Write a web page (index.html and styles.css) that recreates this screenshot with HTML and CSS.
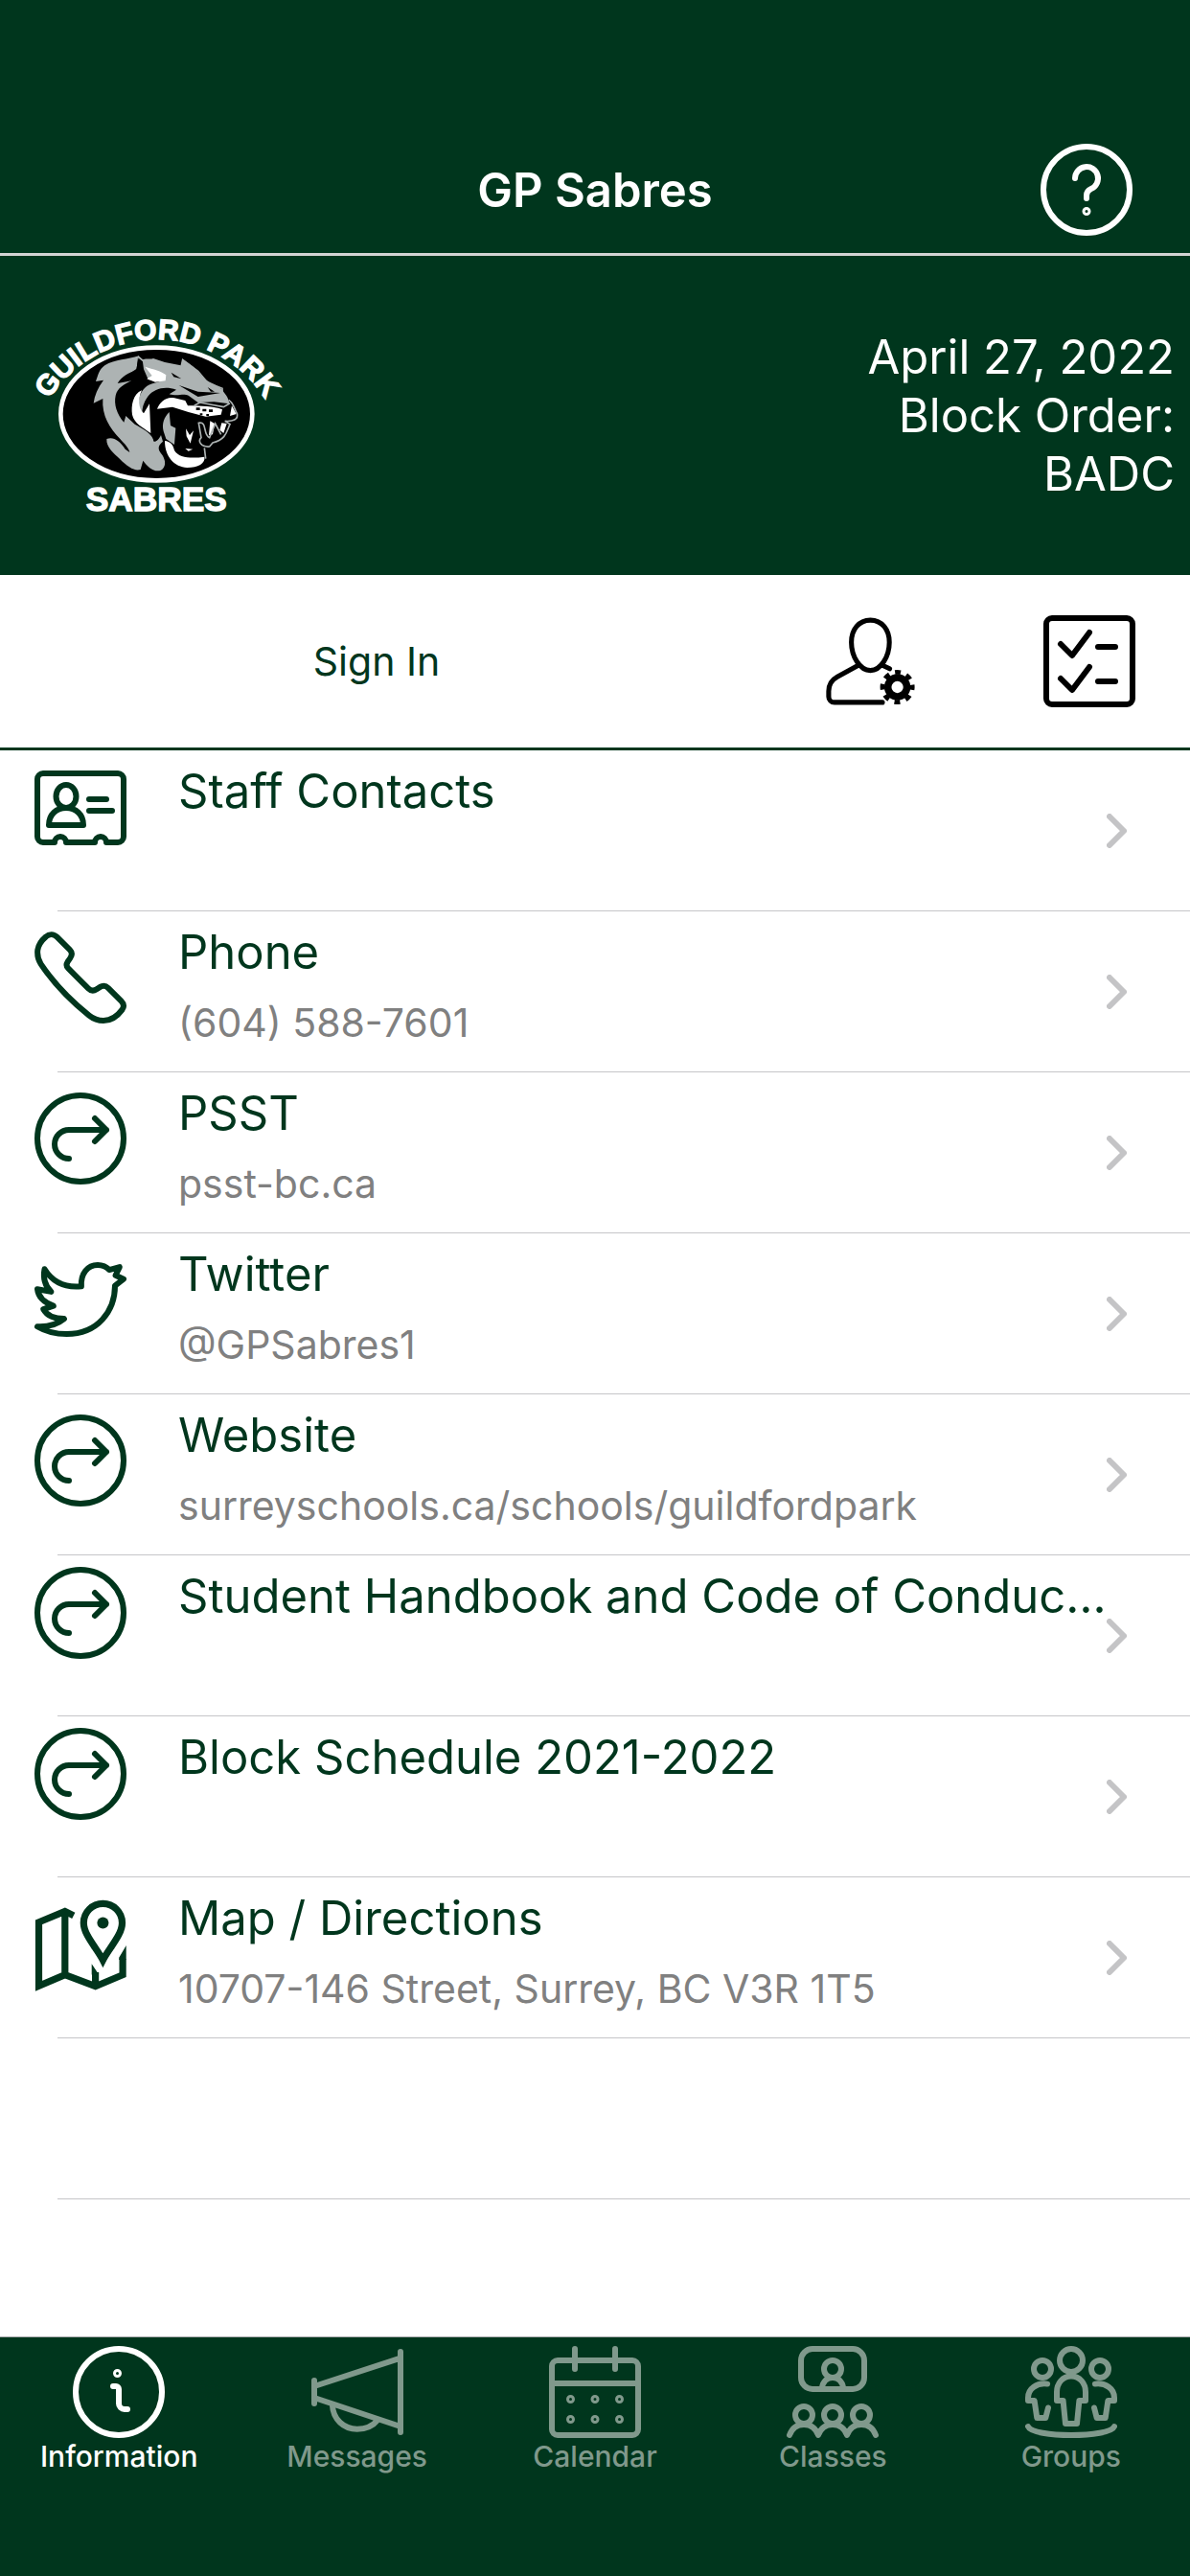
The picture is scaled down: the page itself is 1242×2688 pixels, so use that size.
FILE: index.html
```html
<!DOCTYPE html>
<html lang="en">

<head>
    <meta charset="UTF-8">
    <meta name="viewport" content="width=device-width, initial-scale=1.0">
    <title>GP Sabres</title>
    <link rel="stylesheet" href="styles.css">
</head>
<body>
    <!-- shared icons -->
    <svg class="defs" aria-hidden="true">
        <symbol id="i-forward" viewBox="0 0 32 32">
            <circle cx="16" cy="16" r="15"/>
            <path d="M12 23a5 5 0 0 1 0-10h13M21 9l4 4-4 4"/>
        </symbol>
        <symbol id="i-chevron" viewBox="0 0 21 36">
            <path d="M3 3l15 15L3 33"/>
        </symbol>
    </svg>

    <header class="header">
        <h1>GP Sabres</h1>
        <button class="help" aria-label="Help">
            <svg class="icon" viewBox="0 0 32 32">
                <circle cx="16" cy="16" r="15"/>
                <path d="M12 12a4 4 0 1 1 5.600 3.700C16.500 16.200 16 17 16 18v1"/>
                <circle class="dot" cx="16" cy="23.500" r="1"/>
            </svg>
        </button>
    </header>

    <section class="banner">
        <svg class="logo" viewBox="0 0 870 720" role="img" aria-label="Guildford Park Sabres">
            <path id="arch" d="M90 326A399 399 0 0 1 774 326" fill="none"/>
            <text class="logo-top"><textPath href="#arch" startOffset="50%" text-anchor="middle">GUILDFORD PARK</textPath></text>
            <ellipse cx="430" cy="366" rx="300" ry="208" fill="#000" stroke="#fff" stroke-width="14"/>
            <g fill="#adb3b3">
                <path d="M375 184C340 196 300 194 268 214 250 226 246 248 240 264L264 260C246 284 236 308 233 332L262 318C258 372 284 410 316 444 330 460 342 470 346 486L332 476C314 448 294 436 274 444 272 470 296 488 316 508 340 532 362 546 380 540L388 512C402 532 424 550 444 542 462 530 458 510 448 494 436 480 430 468 450 452L444 432C436 450 420 460 420 446 412 424 384 410 362 398L334 372 328 392C306 366 296 336 302 308 308 284 330 272 352 262L308 270C322 246 344 236 366 230z"/>
                <path d="M386 196C398 190 408 196 420 192L456 204 506 214 514 196C536 210 556 226 570 246 590 268 620 274 636 290 644 304 656 312 658 334L610 328 560 330 530 308C510 300 500 312 470 304L492 290C456 278 424 286 404 310 388 332 384 352 386 366 372 350 370 320 384 296 396 276 416 268 440 266L404 258 390 226z"/>
                <path d="M470 360C454 376 446 396 452 420L460 444 486 462 490 410 474 402z"/>
            </g>
            <path d="M372 188L378 226 396 244 388 274 344 300 356 260 330 250 368 224zM476 236L508 256 484 250zM500 276L560 296 630 300 560 312zM590 282L612 296 600 296z" fill="#000"/>
            <g fill="#fff">
                <path d="M394 218C420 226 446 232 460 244L458 262 426 266 400 256 416 246z"/>
                <path d="M384 292C356 304 350 340 354 368 360 396 388 408 412 426L408 334 390 364C372 348 372 318 384 292z"/>
                <path d="M432 350C440 328 462 310 486 316L520 324 528 340C570 340 610 342 636 352L632 368 584 374 530 360 480 344z"/>
                <path d="M456 450C472 452 482 460 486 480 500 504 540 506 580 500 584 520 560 534 526 534 486 532 456 500 456 450z"/>
                <path d="M522 412L534 432 546 418 536 458 524 436zM520 474L544 476 530 482zM598 388L612 396 606 430 594 432zM634 394L650 396 640 426 628 416zM666 340L680 366 660 372z"/>
            </g>
            <g fill="none" stroke="#adb3b3" stroke-width="5">
                <path d="M372 186L396 206 452 208M508 214L512 196 560 232 590 268 636 286 636 304M656 322C672 332 672 348 682 364 688 384 668 390 644 388M644 388L660 398C650 420 648 446 606 456L596 468C570 470 558 452 570 440L562 394C590 388 574 430 596 440L614 396 632 430M548 340L566 330 640 344 660 332M580 472L584 506"/>
            </g>
            <path d="M554 346h12v8h-12zM574 350h12v8h-12zM594 352h12v8h-12zM566 364h8v6h-8zM586 366h8v6h-8z" fill="#000"/>
            <text class="logo-bottom" x="430" y="669" text-anchor="middle">SABRES</text>
        </svg>
        <p class="notice">April 27, 2022<br>Block Order:<br>BADC</p>
    </section>

    <div class="toolbar">
        <button class="signin">Sign In</button>
        <button class="profile" aria-label="Profile settings">
            <svg class="icon" viewBox="0 0 32 32">
                <path class="thin" d="M15.800 1.700c4 0 6.600 3.300 6.600 7.700 0 5-3 9.800-6.600 9.800s-6.600-4.800-6.600-9.800c0-4.400 2.600-7.700 6.600-7.700zM11.300 17.600l-7 3.800c-2 1.100-3 2.800-3 5v1.900a2 2 0 0 0 2 2H20M20 17.400l2.500 1.200"/>
                <circle class="gear" cx="25.200" cy="25" r="3.300"/>
                <circle class="teeth" cx="25.200" cy="25" r="5.200"/>
            </svg>
        </button>
        <button class="tasks" aria-label="Tasks">
            <svg class="icon" viewBox="0 0 32 32">
                <rect x="1" y="1" width="30" height="30" rx="2"/>
                <path d="M6 10l4 4 6-8M6 22l4 4 6-8M19 11h6M19 23h6"/>
            </svg>
        </button>
    </div>

    <ul class="list">
        <li>
            <a href="#staff">
                <svg class="icon" viewBox="0 0 32 32">
                    <path d="M3 4h26a2 2 0 0 1 2 2v20a2 2 0 0 1-2 2h-4a2 2 0 0 0-4 0H11a2 2 0 0 0-4 0H3a2 2 0 0 1-2-2V6a2 2 0 0 1 2-2z"/>
                    <ellipse cx="11" cy="12" rx="3.500" ry="4"/>
                    <path d="M5 22c0-3.800 2.700-6 6-6s6 2.200 6 6zM19 13h6M19 17h8"/>
                </svg>
                <span class="text"><span class="name">Staff Contacts</span></span>
                <svg class="chevron"><use href="#i-chevron"/></svg>
            </a>
        </li>
        <li class="detailed">
            <a href="#phone">
                <svg class="icon" viewBox="0 0 32 32">
                    <path d="M7.800 1.900l4.500 4.500c.8.800.8 1.900.1 2.900l-.9 1.300c-.5.800-.4 1.600.3 2.300l6.900 6.900c.9.900 2 .9 2.900.3l1.200-.8c1-.6 2.100-.4 2.900.4l4.500 4.500c.9.900 1 2 .3 3C28.800 29.500 26.600 31 24 31c-1.900 0-3.500-.6-5-1.800C12.500 24 6.700 18 2.200 11.300 1.200 9.800.9 8.300 1.100 6.400 1.400 4.500 2.600 3 4 1.800c1.100-1 2.700-1 3.800.1z"/>
                </svg>
                <span class="text"><span class="name">Phone</span><span class="detail">(604) 588-7601</span></span>
                <svg class="chevron"><use href="#i-chevron"/></svg>
            </a>
        </li>
        <li class="detailed">
            <a href="#psst">
                <svg class="icon"><use href="#i-forward"/></svg>
                <span class="text"><span class="name">PSST</span><span class="detail">psst-bc.ca</span></span>
                <svg class="chevron"><use href="#i-chevron"/></svg>
            </a>
        </li>
        <li class="detailed">
            <a href="#twitter">
                <svg class="icon" viewBox="0 0 32 32">
                    <path d="M3.500 5.400C6 9.500 10 12 16.300 11.400 16 7 18.500 4 22 4c1.600 0 3 .6 4 1.700l3.600-1-1.400 2.900L31 8.900 28 11.200C28 20 22 28 11.200 28 7.500 28 4 27.200 1 25.400c4 .2 7-.8 9.300-2.700-4 0-6-1.200-7.200-3.300l3.500-1.200C3.200 17 1.300 15 1 12.400l4.800.9C3.400 11 3 8 3.500 5.400z"/>
                </svg>
                <span class="text"><span class="name">Twitter</span><span class="detail">@GPSabres1</span></span>
                <svg class="chevron"><use href="#i-chevron"/></svg>
            </a>
        </li>
        <li class="detailed">
            <a href="#website">
                <svg class="icon"><use href="#i-forward"/></svg>
                <span class="text"><span class="name">Website</span><span class="detail">surreyschools.ca/schools/guildfordpark</span></span>
                <svg class="chevron"><use href="#i-chevron"/></svg>
            </a>
        </li>
        <li>
            <a href="#handbook">
                <svg class="icon"><use href="#i-forward"/></svg>
                <span class="text"><span class="name">Student Handbook and Code of Conduc…</span></span>
                <svg class="chevron"><use href="#i-chevron"/></svg>
            </a>
        </li>
        <li>
            <a href="#schedule">
                <svg class="icon"><use href="#i-forward"/></svg>
                <span class="text"><span class="name">Block Schedule 2021-2022</span></span>
                <svg class="chevron"><use href="#i-chevron"/></svg>
            </a>
        </li>
        <li class="detailed">
            <a href="#map">
                <svg class="icon map" viewBox="0 0 32 32">
                    <path d="M13.600 6.300l-3-1.500-9.100 3.800v22.200l9.100-3.900 10.600 4 9.500-4v-5.500M10.600 5v22M21.200 30.500v-4.500"/>
                    <path d="M23.800 21.800C21.600 17.500 17.100 13 17.100 8.800a6.700 6.700 0 0 1 13.400 0c0 4.200-4.500 8.700-6.700 13z"/>
                    <path class="solid" d="M19.900 23.100l2.500 3.700h-2.500zM31.900 16.700v5h-2.500v-.8z"/>
                    <circle class="solid" cx="23.800" cy="8.800" r="2"/>
                </svg>
                <span class="text"><span class="name">Map / Directions</span><span class="detail">10707-146 Street, Surrey, BC V3R 1T5</span></span>
                <svg class="chevron"><use href="#i-chevron"/></svg>
            </a>
        </li>
        <li class="empty"></li>
    </ul>

    <nav class="tabs">
        <a href="#information" class="active">
            <svg class="icon" viewBox="0 0 32 32">
                <circle cx="16" cy="16" r="15"/>
                <circle class="dot" cx="15.500" cy="9.500" r="1"/>
                <path d="M14 14h1a1 1 0 0 1 1 1v5a2 2 0 0 0 2 2h1"/>
            </svg>
            <span>Information</span>
        </a>
        <a href="#messages">
            <svg class="icon" viewBox="0 0 32 32">
                <path d="M1 12v8M31 2v28M1 14L31 4.200M1 18l30 10M7.300 20.500c.2 5 4 8.400 8.600 8.400 3 0 5.600-1.200 7.200-3.200"/>
            </svg>
            <span>Messages</span>
        </a>
        <a href="#calendar">
            <svg class="icon" viewBox="0 0 32 32">
                <rect x="1" y="5" width="30" height="26" rx="2"/>
                <path d="M1 13h30M9 1v7M23 1v7"/>
                <g class="dot">
                    <circle cx="7.500" cy="18.500" r="1"/>
                    <circle cx="16" cy="18.500" r="1"/>
                    <circle cx="24.500" cy="18.500" r="1"/>
                    <circle cx="7.500" cy="25.500" r="1"/>
                    <circle cx="16" cy="25.500" r="1"/>
                    <circle cx="24.500" cy="25.500" r="1"/>
                </g>
            </svg>
            <span>Calendar</span>
        </a>
        <a href="#classes">
            <svg class="icon" viewBox="0 0 32 32">
                <rect x="5" y="1" width="22" height="14" rx="4"/>
                <circle cx="16" cy="8" r="3"/>
                <path d="M12.300 14.500c.4-2.200 1.800-3.500 3.700-3.500s3.300 1.300 3.700 3.500"/>
                <circle cx="6" cy="24" r="3"/>
                <circle cx="16" cy="24" r="3"/>
                <circle cx="26" cy="24" r="3"/>
                <path d="M1 31c.9-2.500 2.700-3.700 5-3.700s4.100 1.200 5 3.700c.9-2.500 2.700-3.700 5-3.700s4.100 1.200 5 3.700c.9-2.500 2.700-3.700 5-3.700s4.100 1.200 5 3.700"/>
            </svg>
            <span>Classes</span>
        </a>
        <a href="#groups">
            <svg class="icon" viewBox="0 0 32 32">
                <circle cx="16" cy="5" r="4"/>
                <circle cx="6" cy="8" r="3"/>
                <circle cx="26" cy="8" r="3"/>
                <path d="M13.200 19H11v-3c0-3 2-5.500 5-5.500s5 2.500 5 5.500v3h-2.200l-.8 8h-4z"/>
                <path d="M7.700 13.200C4 12.700 1 14.900 1 18v1h2.200l.9 6h3l.9-3.500M24.300 13.200c3.700-.5 6.700 1.700 6.700 4.800v1h-2.200l-.9 6h-3l-.9-3.500M1 28c1.500 4 28.500 4 30 0"/>
            </svg>
            <span>Groups</span>
        </a>
    </nav>
</body>
</html>
```
FILE: styles.css
```css
*{
    margin: 0;
    padding: 0;
    box-sizing: border-box;
}
body{
    display: flex;
    flex-direction: column;
    min-height: 100vh;
    background: #ffffff;
    color: #00361d;
    font-family: Inter, "Liberation Sans", sans-serif;
    font-size: 49px;
}
a{
    color: inherit;
    text-decoration: none;
}
button{
    border: 0;
    background: none;
    color: inherit;
    font: inherit;
}
.defs{
    position: absolute;
    width: 0;
    height: 0;
}

/* icons */
.icon{
    display: block;
    flex: none;
    width: 96px;
    height: 96px;
    overflow: visible;
    fill: none;
    stroke: currentColor;
    stroke-width: 2;
    stroke-linecap: round;
    stroke-linejoin: round;
}
.icon .dot{
    stroke-width: 1;
}
.icon .thin{
    stroke-width: 1.7;
}
.icon .gear{
    stroke-width: 2.5;
}
.icon .teeth{
    stroke-width: 1.6;
    stroke-linecap: butt;
    stroke-dasharray: 2 2.084;
    stroke-dashoffset: 1;
}
.icon .solid{
    fill: currentColor;
    stroke: none;
}
.icon.map{
    stroke-width: 2.4;
    stroke-linecap: butt;
    stroke-linejoin: miter;
}

/* header */
.header{
    display: grid;
    grid-template-columns: 1fr auto 1fr;
    align-items: center;
    padding: 132px 60px 0;
    height: 267px;
    background: #00361d;
    color: #ffffff;
    border-bottom: 3px solid #d3d3d3;
}
.header h1{
    grid-column: 2;
    font-size: 49px;
    font-weight: 600;
}
.help{
    justify-self: end;
}

.banner{
    display: flex;
    justify-content: space-between;
    align-items: center;
    height: 333px;
    padding: 0 16px 0 20px;
    background: #00361d;
    color: #ffffff;
}
.logo{
    width: 290px;
    height: 240px;
    margin-bottom: 8px;
}
.logo text{
    fill: #ffffff;
    stroke: #ffffff;
    stroke-width: 4;
    font-family: "Liberation Sans", sans-serif;
    font-weight: bold;
}
.logo-top{
    font-size: 90px;
}
.logo-bottom{
    font-size: 106px;
}
.notice{
    line-height: 61px;
    text-align: right;
}

/* sign in bar */
.toolbar{
    display: flex;
    height: 183px;
    border-bottom: 3px solid #00361d;
}
.toolbar button{
    display: flex;
    justify-content: center;
    align-items: center;
}
.toolbar .signin{
    flex: 1;
    font-size: 41px;
}
.profile{
    width: 246px;
    color: #000000;
}
.tasks{
    width: 210px;
    color: #000000;
}

/* list */
.list{
    flex: 1;
    list-style: none;
}
.list li::after{
    content: "";
    display: block;
    height: 1px;
    margin-left: 60px;
    background: #c6c6c8;
}
.list a{
    display: flex;
    height: 167px;
    padding: 12px 66px 0 36px;
}
.list .text{
    flex: 1;
    min-width: 0;
    padding-left: 54px;
}
.name,
.detail{
    display: block;
    overflow: hidden;
    white-space: nowrap;
    text-overflow: ellipsis;
}
.name{
    line-height: 62px;
}
.detail{
    margin-top: 16px;
    color: #808080;
    font-size: 41px;
    line-height: 52px;
}
.detailed .icon{
    margin-top: 9px;
}
.chevron{
    flex: none;
    align-self: center;
    width: 21px;
    height: 36px;
    margin-bottom: 12px;
    fill: none;
    stroke: #c4c4c6;
    stroke-width: 6;
    stroke-linecap: round;
    stroke-linejoin: round;
}
.empty{
    padding-top: 167px;
}

/* tab bar */
.tabs{
    display: flex;
    height: 250px;
    padding-top: 9px;
    background: #00361d;
    border-top: 1px solid #a7a7aa;
    color: #80998c;
    font-size: 30px;
    font-weight: 500;
    line-height: 38px;
}
.tabs a{
    flex: 1;
    display: flex;
    flex-direction: column;
    align-items: center;
}
.tabs .active{
    color: #ffffff;
}
```
